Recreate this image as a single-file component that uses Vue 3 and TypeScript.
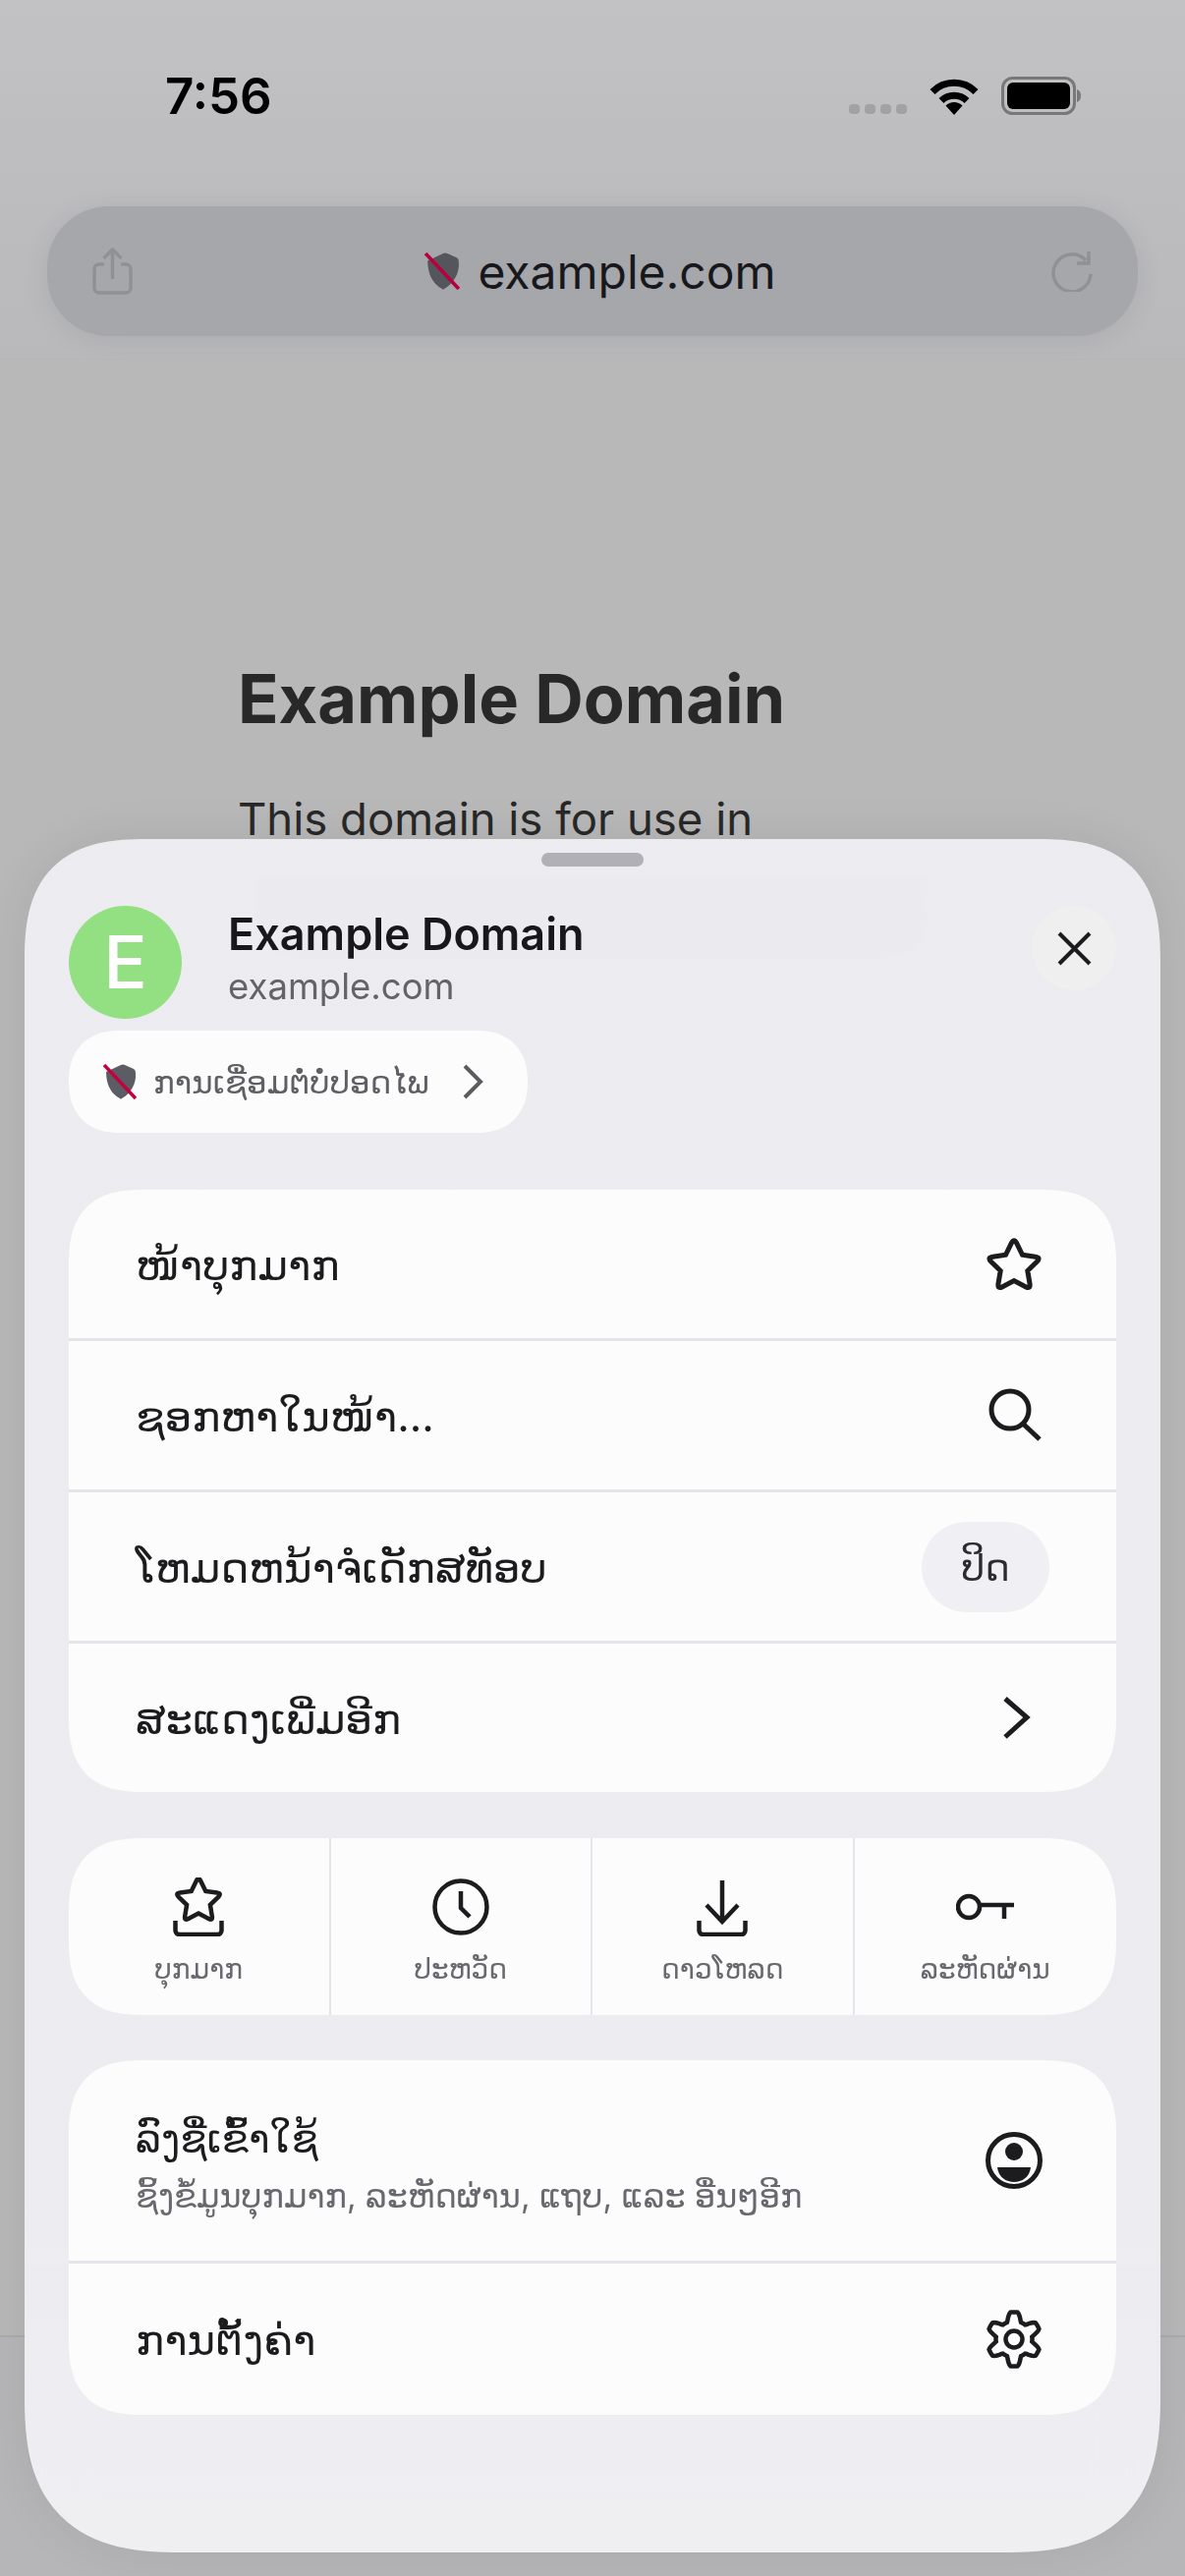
<template>
  <div class="phone">
    <header class="topbar">
      <div class="status">
        <span class="time">7:56</span>
        <div class="status-icons">
          <div class="signal"><i v-for="n in 4" :key="n"></i></div>
          <svg class="wifi" viewBox="0 0 50 37" fill="none" stroke="#000">
            <path stroke-width="7" d="M3 13.500a31 31 0 0 1 44 0" />
            <path stroke-width="7" d="M12 22.500a19 19 0 0 1 26 0" />
            <path fill="#000" stroke="none" d="M16.500 27.500a12 12 0 0 1 17 0L25 37z" />
          </svg>
          <svg class="battery" viewBox="0 0 81 39">
            <rect x="1.500" y="1.500" width="73" height="36" rx="10" fill="none" stroke="#78787a" stroke-width="3" />
            <rect x="6" y="6" width="64" height="27" rx="6" fill="#000" />
            <path d="M77 13c3 1 4 3.500 4 6.500s-1 5.500-4 6.500z" fill="#78787a" />
          </svg>
        </div>
      </div>
      <div class="urlbar">
        <svg class="share" viewBox="0 0 41 48" fill="none" stroke="#919195" stroke-width="3.500">
          <path d="M12 17H7a5 5 0 0 0-5 5v19a5 5 0 0 0 5 5h27a5 5 0 0 0 5-5V22a5 5 0 0 0-5-5h-5" />
          <path d="M20.500 32V3M11.500 11l9-9 9 9" />
        </svg>
        <div class="address">
          <svg class="shield" viewBox="0 0 34 36">
            <path :d="shieldPath" fill="#55555d" />
            <path d="M1 1l32 34" stroke="#b8003c" stroke-width="3.500" />
          </svg>
          <span>example.com</span>
        </div>
        <svg class="reload" viewBox="0 0 45 42" fill="none" stroke="#919195" stroke-width="3.500">
          <path d="M41 24a19 19 0 1 1-5-14" />
          <path d="M39 1v12H27" />
        </svg>
      </div>
    </header>

    <main class="page">
      <h1>Example Domain</h1>
      <p>This domain is for use in</p>
      <!-- the rest of the page, only seen as a smudge through the sheet -->
      <div class="ghost-line"></div>
      <div class="ghost-line"></div>
    </main>

    <div class="bottom-line"></div>

    <section class="sheet">
      <div class="handle"></div>

      <div class="site">
        <div class="favicon">E</div>
        <div class="site-text">
          <div class="site-title">Example Domain</div>
          <div class="site-url">example.com</div>
        </div>
        <button class="close">
          <svg viewBox="0 0 35 35" fill="none" stroke="#1c1c1e" stroke-width="4">
            <path d="M2 2l31 31M33 2L2 33" />
          </svg>
        </button>
      </div>

      <div class="security">
        <svg class="shield" viewBox="0 0 34 36">
          <path :d="shieldPath" fill="#5c5c64" />
          <path d="M1 1l32 34" stroke="#c4003f" stroke-width="3.500" />
        </svg>
        <span>ການເຊື່ອມຕໍ່ບໍ່ປອດໄພ</span>
        <svg class="security-chevron" viewBox="0 0 21 36" fill="none" stroke="#5c5c60" stroke-width="4">
          <path d="M2 2l16 16L2 34" />
        </svg>
      </div>

      <div class="card menu">
        <div class="row">
          <span>ໜ້າບຸກມາກ</span>
          <svg class="row-icon" viewBox="0 0 60 60" fill="none" stroke="#1c1c1e" stroke-width="5">
            <path :d="starLarge" />
          </svg>
        </div>
        <div class="row">
          <span>ຊອກຫາໃນໜ້າ...</span>
          <svg class="row-icon" viewBox="0 0 60 60" fill="none" stroke="#1c1c1e" stroke-width="5">
            <circle cx="26" cy="24" r="19" />
            <path d="M39 38l17 16" />
          </svg>
        </div>
        <div class="row">
          <span>ໂຫມດຫນ້າຈໍເດັກສທັອບ</span>
          <div class="toggle">ປິດ</div>
        </div>
        <div class="row">
          <span>ສະແດງເພີ່ມອີກ</span>
          <svg class="row-icon" viewBox="0 0 60 60" fill="none" stroke="#1c1c1e" stroke-width="5">
            <path d="M21 10l22 19-22 20" />
          </svg>
        </div>
      </div>

      <div class="card shortcuts">
        <div class="shortcut">
          <svg class="shortcut-icon" viewBox="0 0 60 60" fill="none" stroke="#1c1c1e" stroke-width="4.500">
            <path :d="starSmall" />
            <path d="M6.500 44v10a4 4 0 0 0 4 4h39a4 4 0 0 0 4-4V44" />
          </svg>
          <span>ບຸກມາກ</span>
        </div>
        <div class="shortcut">
          <svg class="shortcut-icon" viewBox="0 0 60 60" fill="none" stroke="#1c1c1e" stroke-width="4.500">
            <circle cx="30" cy="30" r="26.500" />
            <path d="M30 14v17l9 9" />
          </svg>
          <span>ປະຫວັດ</span>
        </div>
        <div class="shortcut">
          <svg class="shortcut-icon" viewBox="0 0 60 60" fill="none" stroke="#1c1c1e" stroke-width="4.500">
            <path d="M30 3v42M14 28l16 17 16-17" />
            <path d="M6.500 44v10a4 4 0 0 0 4 4h39a4 4 0 0 0 4-4V44" />
          </svg>
          <span>ດາວໂຫລດ</span>
        </div>
        <div class="shortcut">
          <svg class="shortcut-icon" viewBox="0 0 60 60" fill="none" stroke="#1c1c1e" stroke-width="4.500">
            <circle cx="13" cy="30" r="11" />
            <path d="M24 28h35M49 28v14" />
          </svg>
          <span>ລະຫັດຜ່ານ</span>
        </div>
      </div>

      <div class="card account">
        <div class="row signin">
          <div class="signin-text">
            <span>ລົງຊື່ເຂົ້າໃຊ້</span>
            <small>ຊິ້ງຂໍ້ມູນບຸກມາກ, ລະຫັດຜ່ານ, ແຖບ, ແລະ ອື່ນໆອີກ</small>
          </div>
          <svg class="row-icon" viewBox="0 0 60 60" fill="none" stroke="#1c1c1e" stroke-width="5">
            <circle cx="30" cy="30" r="26.500" />
            <circle cx="30" cy="21" r="9" fill="#1c1c1e" stroke="none" />
            <path d="M13 37h34c-1 10-9 15-17 15s-16-5-17-15z" fill="#1c1c1e" stroke="none" />
          </svg>
        </div>
        <div class="row settings">
          <span>ການຕັ້ງຄ່າ</span>
          <svg class="row-icon" viewBox="0 0 60 60" fill="none" stroke="#1c1c1e" stroke-width="4.500">
            <path :d="gear" />
            <circle cx="30" cy="30" r="8.500" />
          </svg>
        </div>
      </div>
    </section>
  </div>
</template>

<script setup lang="ts">
const shieldPath = 'M3 8L18 1Q20 0 22 1L31 5Q33 6 33 9C34 20 28 30 19 35Q18 36 17 35C9 31 3 22 3 8Z'

// rounded five pointed star, tips are cut by `round` and joined with a curve
function star(cx: number, cy: number, outer: number, inner: number, round: number): string {
  const pts: [number, number][] = []
  for (let i = 0; i < 10; i++) {
    const r = i % 2 === 0 ? outer : inner
    const a = -Math.PI / 2 + (i * Math.PI) / 5
    pts.push([cx + r * Math.cos(a), cy + r * Math.sin(a)])
  }
  const toward = (p: number[], q: number[]) => {
    const len = Math.hypot(q[0] - p[0], q[1] - p[1])
    return [p[0] + ((q[0] - p[0]) * round) / len, p[1] + ((q[1] - p[1]) * round) / len]
  }
  let d = ''
  for (let i = 0; i < 10; i += 2) {
    const tip = pts[i]
    const a = toward(tip, pts[(i + 9) % 10])
    const b = toward(tip, pts[i + 1])
    d += `${i === 0 ? 'M' : 'L'}${a[0].toFixed(1)} ${a[1].toFixed(1)}`
    d += `Q${tip[0].toFixed(1)} ${tip[1].toFixed(1)} ${b[0].toFixed(1)} ${b[1].toFixed(1)}`
    d += `L${pts[i + 1][0].toFixed(1)} ${pts[i + 1][1].toFixed(1)}`
  }
  return d + 'Z'
}

function gearPath(): string {
  let d = ''
  for (let i = 0; i < 144; i++) {
    const a = (i / 144) * Math.PI * 2
    const wave = Math.max(-1, Math.min(1, 1.5 * Math.cos(6 * a)))
    const r = 23 + 4.5 * wave
    d += `${i === 0 ? 'M' : 'L'}${(30 + r * Math.sin(a)).toFixed(1)} ${(30 - r * Math.cos(a)).toFixed(1)}`
  }
  return d + 'Z'
}

const starLarge = star(30, 32, 29, 14.5, 6)
const starSmall = star(30, 24, 25, 12.5, 5)
const gear = gearPath()
</script>

<style scoped>
.phone {
  position: relative;
  width: 1206px;
  height: 2622px;
  overflow: hidden;
  background: #b8b8b8;
  font-family: Inter, "DejaVu Sans", "Noto Sans", sans-serif;
  color: #1c1c1e;
}

.topbar {
  height: 366px;
  box-sizing: border-box;
  background: linear-gradient(#c2c2c4, #bdbdbf 50%, #b9b9bb);
  border-bottom: 1px solid #b6b6b6;
}

.status {
  height: 210px;
  box-sizing: border-box;
  padding: 66px 106px 0 168px;
  display: flex;
  justify-content: space-between;
  align-items: flex-start;
}

.time {
  font-size: 51px;
  line-height: 64px;
  font-weight: 600;
  color: #000;
}

.status-icons {
  display: flex;
  align-items: flex-end;
  padding-top: 12px;
}

.signal {
  display: flex;
  gap: 5px;
  margin-right: 23px;
  margin-bottom: 1px;
}

.signal i {
  width: 11px;
  height: 10px;
  border-radius: 4px;
  background: #a2a2a4;
}

.wifi {
  width: 50px;
  height: 37px;
  margin-right: 23px;
}

.battery {
  width: 81px;
  height: 39px;
}

.urlbar {
  height: 132px;
  margin: 0 48px;
  padding: 0 44px 0 46px;
  display: flex;
  align-items: center;
  justify-content: space-between;
  border-radius: 62px;
  background: #a6a7ab;
  box-shadow: 0 4px 28px rgba(0, 0, 0, 0.08);
}

.share {
  width: 41px;
  height: 48px;
}

.reload {
  width: 45px;
  height: 42px;
}

.address {
  display: flex;
  align-items: center;
  gap: 18px;
  font-size: 48px;
  color: #18181c;
  margin-left: 18px;
}

.address .shield {
  width: 36px;
  height: 38px;
}

.page {
  padding: 306px 0 0 242px;
  width: 720px;
  color: #282828;
}

.page h1 {
  margin: 0;
  font-size: 68.500px;
  line-height: 80px;
  font-weight: 700;
}

.page p {
  margin: 54px 0 0;
  font-size: 45.500px;
  line-height: 56px;
}

.ghost-line {
  height: 24px;
  margin-top: 32px;
  background: rgba(40, 40, 40, 0.3);
}

.bottom-line {
  position: absolute;
  left: 0;
  right: 0;
  top: 2377px;
  bottom: 0;
  background: #b6b6b8;
  border-top: 2px solid #ababad;
}

.sheet {
  position: absolute;
  left: 25px;
  top: 854px;
  width: 1156px;
  height: 1744px;
  box-sizing: border-box;
  padding: 14px 45px 0;
  border-radius: 100px 100px 120px 120px;
  background: linear-gradient(rgba(238, 238, 242, 0.97) 80%, rgba(240, 240, 243, 0.98));
  backdrop-filter: blur(30px);
  box-shadow: 0 0 50px rgba(0, 0, 0, 0.08);
  display: flex;
  flex-direction: column;
}

.handle {
  width: 104px;
  height: 14px;
  margin: 0 auto 40px;
  border-radius: 7px;
  background: #b0b0b6;
}

.site {
  display: flex;
  align-items: flex-start;
}

.favicon {
  width: 115px;
  height: 115px;
  border-radius: 50%;
  background: #92e082;
  color: #fff;
  font-size: 74px;
  line-height: 115px;
  text-align: center;
  font-weight: 500;
}

.site-text {
  margin-left: 47px;
  padding-top: 3px;
}

.site-title {
  font-size: 45px;
  line-height: 52px;
  font-weight: 600;
  color: #17171c;
}

.site-url {
  margin-top: 3px;
  font-size: 36.500px;
  line-height: 48px;
  color: #63636a;
}

.close {
  width: 86px;
  height: 86px;
  margin-left: auto;
  padding: 0;
  border: 0;
  border-radius: 50%;
  background: #efeff0;
  display: flex;
  align-items: center;
  justify-content: center;
}

.close svg {
  width: 35px;
  height: 35px;
}

.security {
  align-self: flex-start;
  width: 467px;
  height: 104px;
  box-sizing: border-box;
  margin-top: 12px;
  padding: 0 45px 0 35px;
  display: flex;
  align-items: center;
  border-radius: 52px;
  background: #fcfcfd;
  color: #5e5e64;
  font-size: 32.500px;
}

.security .shield {
  width: 34px;
  height: 36px;
  flex-shrink: 0;
  margin-right: 17px;
}

.security-chevron {
  width: 21px;
  height: 36px;
  margin-left: auto;
}

.card {
  background: #fcfcfd;
  border-radius: 62px;
  overflow: hidden;
}

.menu {
  height: 613px;
  margin-top: 58px;
  display: flex;
  flex-direction: column;
}

.row {
  flex: 1;
  min-height: 0;
  box-sizing: border-box;
  padding: 0 74px 0 68px;
  display: flex;
  align-items: center;
  justify-content: space-between;
  border-bottom: 3px solid #e4e4ea;
  font-size: 43.500px;
  color: #1c1c1e;
}

.row:last-child {
  border-bottom: 0;
}

.row-icon {
  width: 60px;
  height: 60px;
  flex-shrink: 0;
}

.toggle {
  width: 130px;
  height: 92px;
  margin-right: -6px;
  border-radius: 46px;
  background: #f0f0f4;
  font-size: 38px;
  line-height: 92px;
  text-align: center;
  color: #2c2c2e;
}

.shortcuts {
  height: 180px;
  margin-top: 47px;
  display: grid;
  grid-template-columns: repeat(4, 1fr);
}

.shortcut {
  display: flex;
  flex-direction: column;
  align-items: center;
  padding-top: 40px;
  border-right: 2px solid #e4e4ea;
  color: #68686e;
  font-size: 28px;
}

.shortcut:last-child {
  border-right: 0;
}

.shortcut-icon {
  width: 60px;
  height: 60px;
}

.shortcut span {
  margin-top: 16px;
}

.account {
  height: 361px;
  margin-top: 46px;
  display: flex;
  flex-direction: column;
}

.signin {
  flex: none;
  height: 207px;
}

.settings {
  flex: none;
  height: 154px;
}

.signin-text {
  display: flex;
  flex-direction: column;
  gap: 14px;
  padding-top: 8px;
  font-size: 40px;
}

.signin-text small {
  font-size: 33.500px;
  color: #68686e;
}

@supports (corner-shape: squircle) {
  .sheet {
    border-radius: 125px 125px 160px 160px;
    corner-shape: superellipse(1.4);
  }

  .card {
    border-radius: 78px;
    corner-shape: superellipse(1.4);
  }

  .security {
    border-radius: 52px;
    corner-shape: superellipse(1.2);
  }
}
</style>
